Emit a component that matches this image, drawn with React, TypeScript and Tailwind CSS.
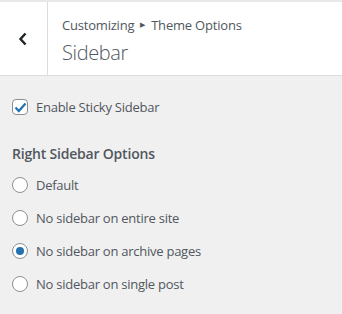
export default function App() {
  const options = [
    'Default',
    'No sidebar on entire site',
    'No sidebar on archive pages',
    'No sidebar on single post',
  ]
  const selected = 2

  return (
    <div className="w-[342px] h-[314px] bg-[#f0f0f0] text-[#50575e] font-['Open_Sans',sans-serif] overflow-hidden">
      {/* Header */}
      <div className="flex h-[76px] bg-white border-t-2 border-t-[#e8e8e8] border-b border-b-[#dcdcde]">
        <div className="w-[48px] shrink-0 flex items-center justify-center border-r border-r-[#dcdcde]">
          <svg width="10" height="14" viewBox="0 0 10 14" className="ml-[-1px]">
            <path d="M7.5 1.5 L2.5 7 L7.5 12.5" fill="none" stroke="#1d2327" strokeWidth="2.4" />
          </svg>
        </div>
        <div className="flex flex-col pl-[14px] pt-[14px]">
          <div className="flex items-center text-[13px] leading-[18px] tracking-[-0.2px] text-[#50575e]">
            Customizing
            <span className="text-[7px] mx-[6px] text-[#50575e]">▶</span>
            Theme Options
          </div>
          <div className="text-[20px] leading-[28px] mt-[5px] font-light tracking-[-0.4px] text-[#50575e]">Sidebar</div>
        </div>
      </div>

      {/* Body */}
      <div className="px-[12px] pt-[22px]">
        <label className="flex items-center gap-[8px] text-[13px] leading-[18px] tracking-[-0.25px]">
          <span className="w-[16px] h-[16px] rounded-[4px] border border-[#8c8f94] bg-white flex items-center justify-center">
            <svg width="13" height="11" viewBox="0 0 13 11">
              <path d="M1.5 5.5 L4.8 9 L11.5 1.5" fill="none" stroke="#2271b1" strokeWidth="2.2" />
            </svg>
          </span>
          Enable Sticky Sidebar
        </label>

        <div className="mt-[28px] text-[14px] leading-[20px] font-semibold tracking-[-0.2px] text-[#50575e]">Right Sidebar Options</div>

        <div className="mt-[12px] flex flex-col gap-[15px]">
          {options.map((opt, i) => (
            <label key={opt} className="flex items-center gap-[8px] text-[13px] leading-[18px] tracking-[-0.25px]">
              <span className="w-[16px] h-[16px] rounded-full border border-[#8c8f94] bg-white flex items-center justify-center">
                {i === selected && <span className="w-[8px] h-[8px] rounded-full bg-[#2271b1]" />}
              </span>
              {opt}
            </label>
          ))}
        </div>
      </div>
    </div>
  )
}
